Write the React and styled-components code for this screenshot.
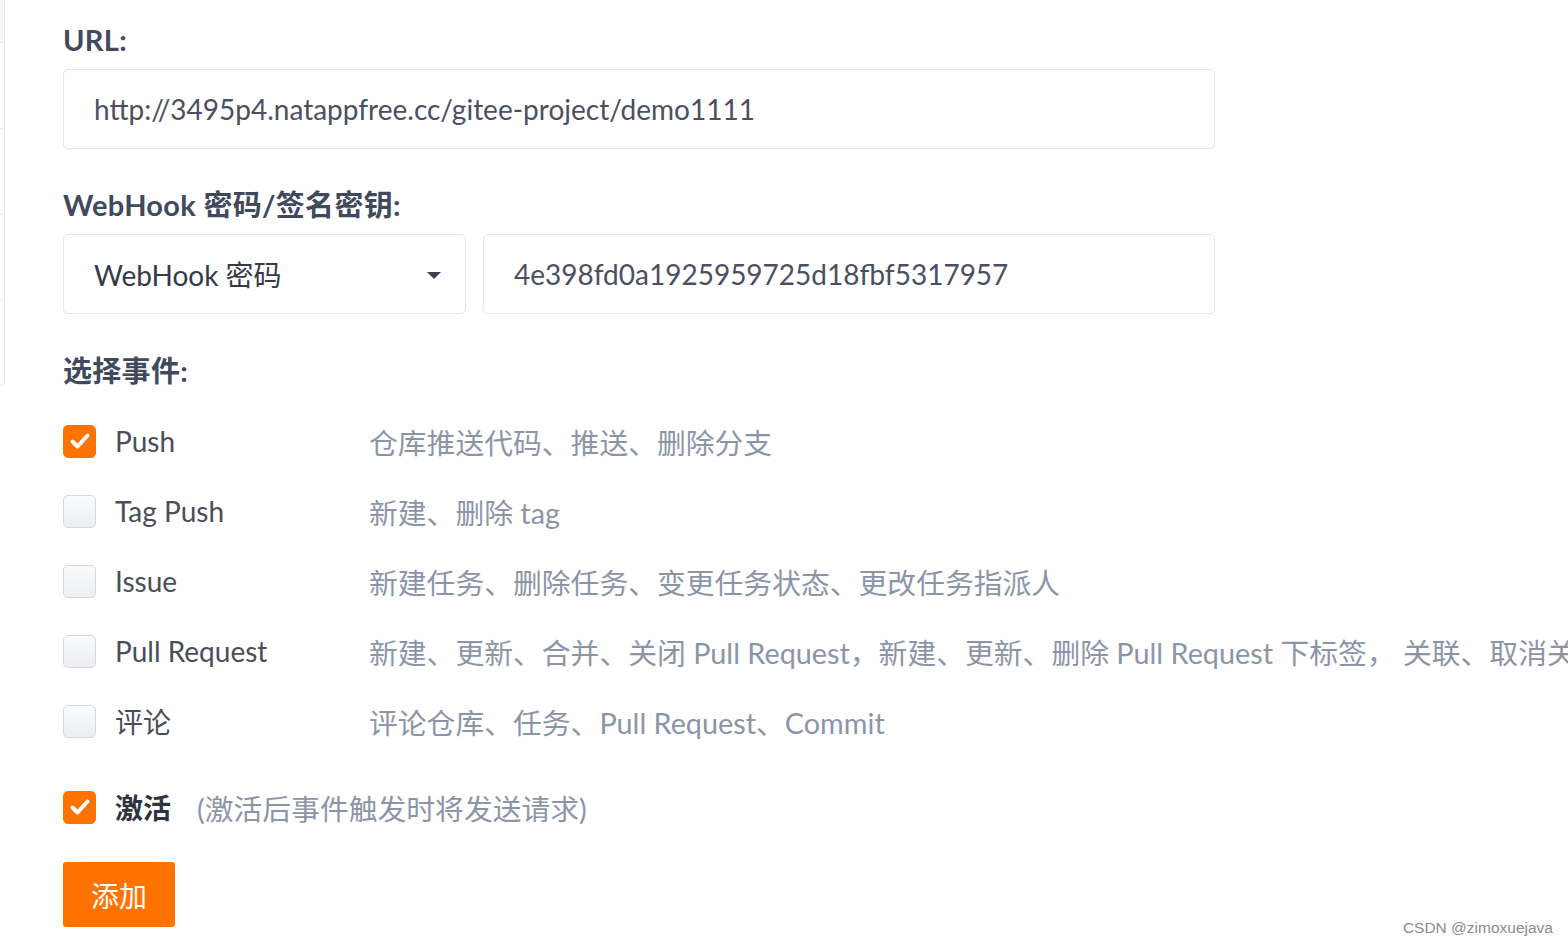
import React from 'react'
import styled, { createGlobalStyle } from 'styled-components'

const GlobalStyle = createGlobalStyle`
    html, body {
        margin: 0;
        padding: 0;
        background: #fff;
        overflow: hidden;
    }
    body {
        font-family: Lato, "Noto Sans CJK SC", sans-serif;
    }
`

const events = [
    { name: 'Push', desc: '仓库推送代码、推送、删除分支', checked: true },
    { name: 'Tag Push', desc: '新建、删除 tag' },
    { name: 'Issue', desc: '新建任务、删除任务、变更任务状态、更改任务指派人' },
    { name: 'Pull Request', desc: '新建、更新、合并、关闭 Pull Request，新建、更新、删除 Pull Request 下标签， 关联、取消关联任务' },
    { name: '评论', desc: '评论仓库、任务、Pull Request、Commit' },
]

function Checkbox({ checked }) {
    return (
        <Box checked={checked}>
            {checked && (
                <svg width="26" height="26" viewBox="0 0 26 26">
                    <path d="M5.5 13.5 L10.5 18.5 L20.5 7.5" fill="none" stroke="#fff" strokeWidth="4" strokeLinecap="round" strokeLinejoin="round" />
                </svg>
            )}
        </Box>
    )
}

function App() {
    return (
        <Page>
            <GlobalStyle />
            <SideStub>
                <StubHead />
                <StubRow />
                <StubRow />
                <StubRow />
                <StubRow last />
            </SideStub>
            <Form>
                <Label>URL:</Label>
                <Input>http://3495p4.natappfree.cc/gitee-project/demo1111</Input>

                <Label top={36}>WebHook 密码/签名密钥:</Label>
                <SecretRow>
                    <Select>
                        <span>WebHook 密码</span>
                        <Caret />
                    </Select>
                    <Input grow>4e398fd0a1925959725d18fbf5317957</Input>
                </SecretRow>

                <Label top={37}>选择事件:</Label>
                <EventList>
                    {events.map((e) => (
                        <EventRow key={e.name}>
                            <Checkbox checked={e.checked} />
                            <EventName>{e.name}</EventName>
                            <EventDesc>{e.desc}</EventDesc>
                        </EventRow>
                    ))}
                </EventList>

                <ActiveRow>
                    <Checkbox checked />
                    <ActiveName>激活</ActiveName>
                    <ActiveHint>(激活后事件触发时将发送请求)</ActiveHint>
                </ActiveRow>

                <AddButton>添加</AddButton>
            </Form>
            <Watermark>CSDN @zimoxuejava</Watermark>
        </Page>
    )
}

export default App

const Page = styled.div`
    position: relative;
    display: flex;
    align-items: flex-start;
    width: 1568px;
    height: 945px;
    overflow: hidden;
    background: #fff;
`

const SideStub = styled.div`
    width: 4px;
    flex-shrink: 0;
    display: flex;
    flex-direction: column;
    border-right: 1px solid #e6e8ec;
    border-bottom: 1px solid #e6e8ec;
    border-bottom-right-radius: 4px;
`

const StubHead = styled.div`
    height: 42px;
    background: #f4f5f7;
`

const StubRow = styled.div`
    height: ${(p) => (p.last ? 84 : 85)}px;
    border-top: 1px solid #e6e8ec;
`

const Form = styled.div`
    margin-left: 58px;
    width: 1152px;
    flex-shrink: 0;
    display: flex;
    flex-direction: column;
    padding-top: 20px;
`

const Label = styled.div`
    margin-top: ${(p) => p.top || 0}px;
    margin-bottom: 9px;
    height: 40px;
    line-height: 40px;
    font-size: 29px;
    font-weight: 700;
    color: #414a5d;
    letter-spacing: 0.3px;
    white-space: nowrap;
`

const Input = styled.div`
    flex: ${(p) => (p.grow ? 1 : 'none')};
    height: 80px;
    box-sizing: border-box;
    border: 1px solid #e3e6ec;
    border-radius: 5px;
    padding: 0 30px;
    display: flex;
    align-items: center;
    font-size: 28px;
    color: #4a5061;
    white-space: nowrap;
`

const SecretRow = styled.div`
    display: flex;
    gap: 17px;
`

const Select = styled.div`
    width: 403px;
    flex-shrink: 0;
    height: 80px;
    box-sizing: border-box;
    border: 1px solid #e3e6ec;
    border-radius: 5px;
    padding: 0 24px 0 30px;
    display: flex;
    align-items: center;
    justify-content: space-between;
    font-size: 28px;
    color: #353a47;
    white-space: nowrap;
`

const Caret = styled.span`
    width: 0;
    height: 0;
    border-left: 7px solid transparent;
    border-right: 7px solid transparent;
    border-top: 7px solid #3a3f4b;
    margin-top: 2px;
`

const EventList = styled.div`
    margin-top: 6px;
    display: flex;
    flex-direction: column;
`

const EventRow = styled.div`
    height: 70px;
    display: flex;
    align-items: center;
    white-space: nowrap;
`

const Box = styled.span`
    width: 33px;
    height: 33px;
    box-sizing: border-box;
    flex-shrink: 0;
    border-radius: 5px;
    display: flex;
    align-items: center;
    justify-content: center;
    border: 1px solid ${(p) => (p.checked ? '#fe7300' : '#d3d7de')};
    background: ${(p) => (p.checked ? '#fe7300' : 'linear-gradient(#fafbfc, #eceef2)')};
`

const EventName = styled.span`
    width: 254px;
    flex-shrink: 0;
    margin-left: 19px;
    font-size: 28px;
    color: #4a4e58;
`

const EventDesc = styled.span`
    font-size: 28.8px;
    color: #8c95a8;
`

const ActiveRow = styled.div`
    margin-top: 16px;
    height: 70px;
    display: flex;
    align-items: center;
    white-space: nowrap;
`

const ActiveName = styled.span`
    margin-left: 19px;
    font-size: 28px;
    font-weight: 700;
    color: #2f3340;
`

const ActiveHint = styled.span`
    margin-left: 26px;
    font-size: 28.8px;
    color: #8c95a8;
`

const AddButton = styled.button`
    margin-top: 20px;
    width: 112px;
    height: 65px;
    border: none;
    border-radius: 3px;
    background: #fe7300;
    color: #fff;
    font-family: Lato, "Noto Sans CJK SC", sans-serif;
    font-size: 28px;
    padding: 0;
    cursor: pointer;
`

const Watermark = styled.div`
    position: absolute;
    right: 15px;
    bottom: 8px;
    font-family: "Liberation Sans", Arial, sans-serif;
    font-size: 15.5px;
    color: #8c8c8c;
`
